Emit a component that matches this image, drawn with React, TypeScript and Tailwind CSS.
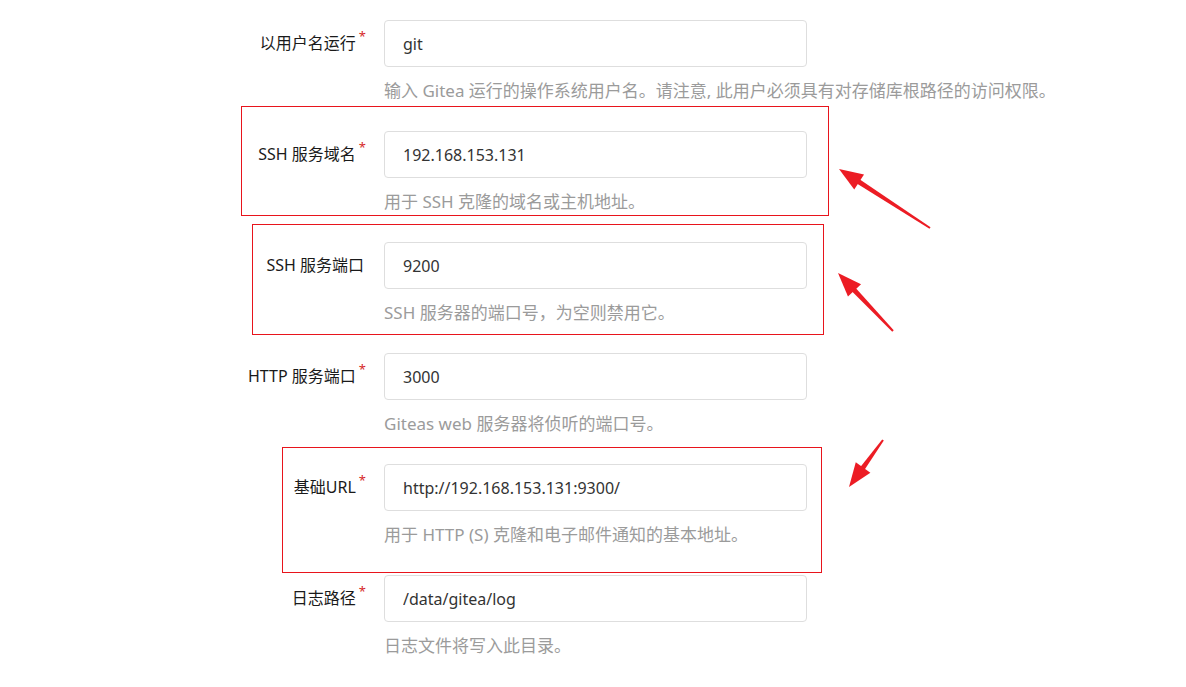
import React from 'react'

const fields = [
  { label: '以用户名运行', required: true, value: 'git', help: '输入 Gitea 运行的操作系统用户名。请注意, 此用户必须具有对存储库根路径的访问权限。' },
  { label: 'SSH 服务域名', required: true, value: '192.168.153.131', help: '用于 SSH 克隆的域名或主机地址。' },
  { label: 'SSH 服务端口', required: false, value: '9200', help: 'SSH 服务器的端口号，为空则禁用它。' },
  { label: 'HTTP 服务端口', required: true, value: '3000', help: 'Giteas web 服务器将侦听的端口号。' },
  { label: '基础URL', required: true, value: 'http://192.168.153.131:9300/', help: '用于 HTTP (S) 克隆和电子邮件通知的基本地址。' },
  { label: '日志路径', required: true, value: '/data/gitea/log', help: '日志文件将写入此目录。' },
]

// tail -> tip
const arrows = [
  { x1: 930, y1: 228, x2: 839, y2: 169 },
  { x1: 893, y1: 331, x2: 838, y2: 273 },
  { x1: 883, y1: 440, x2: 849, y2: 487 },
]

function Arrow({ x1, y1, x2, y2 }: { x1: number; y1: number; x2: number; y2: number }) {
  const dx = x2 - x1
  const dy = y2 - y1
  const len = Math.sqrt(dx * dx + dy * dy)
  const ux = dx / len
  const uy = dy / len
  const head = 24
  const half = 9
  const bx = x2 - ux * head
  const by = y2 - uy * head
  // tapered shaft: thin at the tail, wider near the head
  const t = 1
  const w = 2.6
  const shaft = [
    `${x1 - uy * t},${y1 + ux * t}`,
    `${bx + ux * 3 - uy * w},${by + uy * 3 + ux * w}`,
    `${bx + ux * 3 + uy * w},${by + uy * 3 - ux * w}`,
    `${x1 + uy * t},${y1 - ux * t}`,
  ].join(' ')
  const p1 = `${x2},${y2}`
  const p2 = `${bx - uy * half},${by + ux * half}`
  const p3 = `${bx + uy * half},${by - ux * half}`
  return (
    <g fill="#ec1c24">
      <polygon points={shaft} />
      <polygon points={`${p1} ${p2} ${p3}`} />
    </g>
  )
}

export default function App() {
  return (
    <div
      className="relative w-[1186px] h-[687px] bg-white overflow-hidden"
      style={{ fontFamily: '"Noto Sans", "Noto Sans CJK SC", sans-serif' }}
    >
      <div className="pt-[20px] pl-[216px]">
        {fields.map((f) => (
          <div key={f.label} className="flex pb-[28px]">
            <div className="w-[150px] h-[47px] flex items-center justify-end pb-[2px]">
              <span className="text-[16px] text-[#1a1a1a] leading-[20px]">{f.label}</span>
              {f.required ? (
                <span className="relative -top-[6px] ml-[3px] text-[13px] leading-none text-[#d62828]">*</span>
              ) : (
                <span className="w-[2px]" />
              )}
            </div>
            <div className="ml-[18px] w-[423px]">
              <input
                readOnly
                defaultValue={f.value}
                className="block w-full h-[47px] border border-[#dedede] rounded-[4px] px-[18px] text-[16px] text-[#333] outline-none"
              />
              <div className="mt-[12px] text-[17px] leading-[24px] text-[#9b9b9b] whitespace-nowrap">{f.help}</div>
            </div>
          </div>
        ))}
      </div>

      <div className="absolute left-[241px] top-[106px] w-[588px] h-[110px] border border-[#e8141c]" />
      <div className="absolute left-[252px] top-[224px] w-[572px] h-[111px] border border-[#e8141c]" />
      <div className="absolute left-[282px] top-[447px] w-[540px] h-[126px] border border-[#e8141c]" />

      <svg className="absolute left-0 top-0" width={1186} height={687}>
        {arrows.map((a, i) => (
          <Arrow key={i} {...a} />
        ))}
      </svg>
    </div>
  )
}
